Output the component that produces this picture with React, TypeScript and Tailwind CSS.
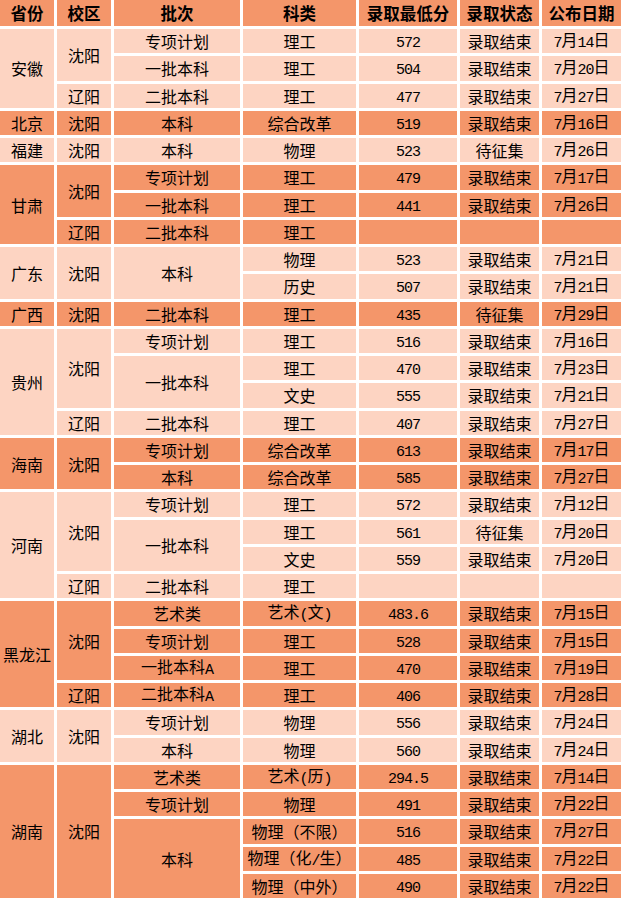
import React from 'react';

type Row = [string, string, string, string];
interface Batch { name: string; rows: Row[] }
interface Campus { name: string; batches: Batch[] }
interface Group { prov: string; campuses: Campus[] }

const groups: Group[] = [
    { prov: '安徽', campuses: [
        { name: '沈阳', batches: [
            { name: '专项计划', rows: [['理工', '572', '录取结束', '7月14日']] },
            { name: '一批本科', rows: [['理工', '504', '录取结束', '7月20日']] },
        ] },
        { name: '辽阳', batches: [{ name: '二批本科', rows: [['理工', '477', '录取结束', '7月27日']] }] },
    ] },
    { prov: '北京', campuses: [
        { name: '沈阳', batches: [{ name: '本科', rows: [['综合改革', '519', '录取结束', '7月16日']] }] },
    ] },
    { prov: '福建', campuses: [
        { name: '沈阳', batches: [{ name: '本科', rows: [['物理', '523', '待征集', '7月26日']] }] },
    ] },
    { prov: '甘肃', campuses: [
        { name: '沈阳', batches: [
            { name: '专项计划', rows: [['理工', '479', '录取结束', '7月17日']] },
            { name: '一批本科', rows: [['理工', '441', '录取结束', '7月26日']] },
        ] },
        { name: '辽阳', batches: [{ name: '二批本科', rows: [['理工', '', '', '']] }] },
    ] },
    { prov: '广东', campuses: [
        { name: '沈阳', batches: [
            { name: '本科', rows: [
                ['物理', '523', '录取结束', '7月21日'],
                ['历史', '507', '录取结束', '7月21日'],
            ] },
        ] },
    ] },
    { prov: '广西', campuses: [
        { name: '沈阳', batches: [{ name: '二批本科', rows: [['理工', '435', '待征集', '7月29日']] }] },
    ] },
    { prov: '贵州', campuses: [
        { name: '沈阳', batches: [
            { name: '专项计划', rows: [['理工', '516', '录取结束', '7月16日']] },
            { name: '一批本科', rows: [
                ['理工', '470', '录取结束', '7月23日'],
                ['文史', '555', '录取结束', '7月21日'],
            ] },
        ] },
        { name: '辽阳', batches: [{ name: '二批本科', rows: [['理工', '407', '录取结束', '7月27日']] }] },
    ] },
    { prov: '海南', campuses: [
        { name: '沈阳', batches: [
            { name: '专项计划', rows: [['综合改革', '613', '录取结束', '7月17日']] },
            { name: '本科', rows: [['综合改革', '585', '录取结束', '7月27日']] },
        ] },
    ] },
    { prov: '河南', campuses: [
        { name: '沈阳', batches: [
            { name: '专项计划', rows: [['理工', '572', '录取结束', '7月12日']] },
            { name: '一批本科', rows: [
                ['理工', '561', '待征集', '7月20日'],
                ['文史', '559', '录取结束', '7月20日'],
            ] },
        ] },
        { name: '辽阳', batches: [{ name: '二批本科', rows: [['理工', '', '', '']] }] },
    ] },
    { prov: '黑龙江', campuses: [
        { name: '沈阳', batches: [
            { name: '艺术类', rows: [['艺术(文)', '483.6', '录取结束', '7月15日']] },
            { name: '专项计划', rows: [['理工', '528', '录取结束', '7月15日']] },
            { name: '一批本科A', rows: [['理工', '470', '录取结束', '7月19日']] },
        ] },
        { name: '辽阳', batches: [{ name: '二批本科A', rows: [['理工', '406', '录取结束', '7月28日']] }] },
    ] },
    { prov: '湖北', campuses: [
        { name: '沈阳', batches: [
            { name: '专项计划', rows: [['物理', '556', '录取结束', '7月24日']] },
            { name: '本科', rows: [['物理', '560', '录取结束', '7月24日']] },
        ] },
    ] },
    { prov: '湖南', campuses: [
        { name: '沈阳', batches: [
            { name: '艺术类', rows: [['艺术(历)', '294.5', '录取结束', '7月14日']] },
            { name: '专项计划', rows: [['物理', '491', '录取结束', '7月22日']] },
            { name: '本科', rows: [
                ['物理（不限）', '516', '录取结束', '7月27日'],
                ['物理（化/生）', '485', '录取结束', '7月22日'],
                ['物理（中外）', '490', '录取结束', '7月22日'],
            ] },
        ] },
    ] },
];

// ascii runs look like SimSun half-width glyphs, so give them a narrow mono face
const Txt = ({ text }: { text: string }) => {
    const parts = text.split(/([\x00-\x7F]+)/).filter(Boolean);
    return (
        <>
            {parts.map((p, i) =>
                /^[\x00-\x7F]+$/.test(p) ? (
                    <span key={i} className="font-['Liberation_Mono',monospace] text-[15px] tracking-[-1px] align-[-1px]">{p}</span>
                ) : (
                    <span key={i}>{p}</span>
                )
            )}
        </>
    );
};

const Cell = ({ w, dark, children }: { w: string; dark: boolean; children?: React.ReactNode }) => (
    <div className={`${w} shrink-0 flex items-center justify-center whitespace-nowrap ${dark ? 'bg-[#f4966a]' : 'bg-[#fdd4c2]'}`}>
        <div>{children}</div>
    </div>
);

const headers: [string, string][] = [
    ['省份', 'w-[54px]'],
    ['校区', 'w-[54px]'],
    ['批次', 'w-[126px]'],
    ['科类', 'w-[113px]'],
    ['录取最低分', 'w-[98px]'],
    ['录取状态', 'w-[79px]'],
    ['公布日期', 'flex-1'],
];

export default function App() {
    return (
        <div className="w-[621px] h-[901px] bg-white flex flex-col gap-[3px] text-black text-[16px] leading-none font-['Noto_Sans_CJK_SC',sans-serif]">
            <div className="flex gap-[3px] h-[26px]">
                {headers.map(([h, w]) => (
                    <div key={h} className={`${w} shrink-0 bg-[#f4966a] flex items-center justify-center font-bold text-[16.5px]`}>
                        {h}
                    </div>
                ))}
            </div>
            {groups.map((g, gi) => {
                const dark = gi % 2 === 1;
                return (
                    <div key={g.prov} className="flex gap-[3px]">
                        <Cell w="w-[54px]" dark={dark}>{g.prov}</Cell>
                        <div className="flex-1 flex flex-col gap-[3px]">
                            {g.campuses.map((c, ci) => (
                                <div key={ci} className="flex gap-[3px]">
                                    <Cell w="w-[54px]" dark={dark}>{c.name}</Cell>
                                    <div className="flex-1 flex flex-col gap-[3px]">
                                        {c.batches.map((b, bi) => (
                                            <div key={bi} className="flex gap-[3px]">
                                                <Cell w="w-[126px]" dark={dark}><Txt text={b.name} /></Cell>
                                                <div className="flex-1 flex flex-col gap-[3px]">
                                                    {b.rows.map((r, ri) => (
                                                        <div key={ri} className="flex gap-[3px] h-[24.25px]">
                                                            <Cell w="w-[113px]" dark={dark}><Txt text={r[0]} /></Cell>
                                                            <Cell w="w-[98px]" dark={dark}><Txt text={r[1]} /></Cell>
                                                            <Cell w="w-[79px]" dark={dark}>{r[2]}</Cell>
                                                            <Cell w="flex-1" dark={dark}><Txt text={r[3]} /></Cell>
                                                        </div>
                                                    ))}
                                                </div>
                                            </div>
                                        ))}
                                    </div>
                                </div>
                            ))}
                        </div>
                    </div>
                );
            })}
        </div>
    );
}
